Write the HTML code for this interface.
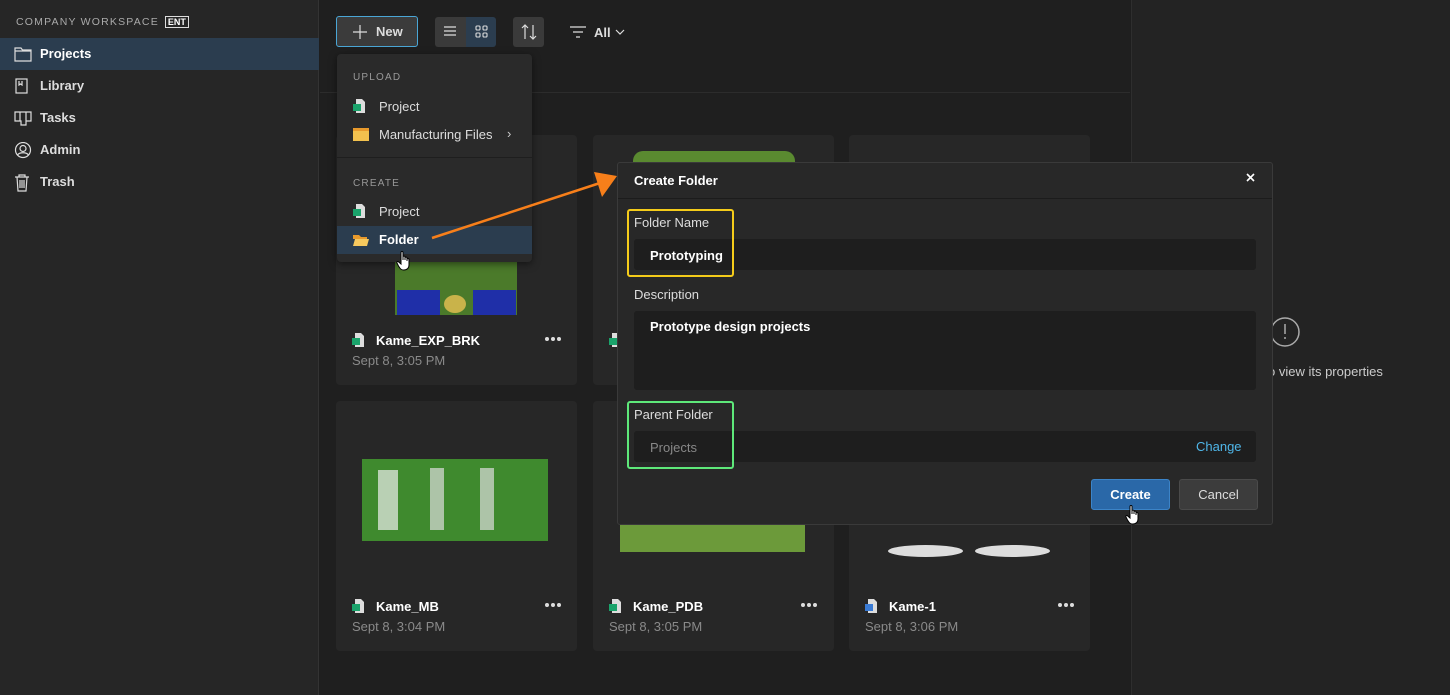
<!DOCTYPE html>
<html><head><style>
*{box-sizing:border-box;margin:0;padding:0}
body{width:1450px;height:695px;overflow:hidden;background:#1e1e1e;font-family:"Liberation Sans",sans-serif;color:#e6e6e6;position:relative;font-size:13px}
.abs{position:absolute}
.side{left:0;top:0;width:319px;height:695px;background:#262626;border-right:1px solid #333}
.ws{left:16px;top:16px;font-size:10.5px;letter-spacing:1.2px;color:#aaa}
.ent{display:inline-block;border:1px solid #ddd;color:#fff;font-size:9px;font-weight:bold;padding:0 2px;margin-left:6px;letter-spacing:0;line-height:10px}
.nav{left:0;width:319px;height:32px;line-height:32px;padding-left:40px;font-size:13px;font-weight:bold;color:#ddd}
.nav svg{position:absolute;left:14px;top:8px}
.main{left:320px;top:0;width:810px;height:695px;background:#1f1f1f}
.right{left:1131px;top:0;width:319px;height:695px;background:#232323;border-left:1px solid #2e2e2e}
.card{background:#272727;border-radius:4px;width:241px;height:250px}
.ct{font-weight:bold;font-size:13px;color:#fff}
.cd{font-size:13px;color:#8a8a8a}
.btn{border-radius:3px;background:#3a3a3a}
.menu{left:337px;top:54px;width:195px;height:208px;background:#2a2a2a;border-radius:4px;box-shadow:0 2px 8px rgba(0,0,0,.5)}
.mh{font-size:10px;letter-spacing:1.2px;color:#999;position:absolute;left:16px}
.mi{position:absolute;left:42px;font-size:13px;color:#ddd}
.dlg{left:617px;top:162px;width:656px;height:363px;background:#282828;border:1px solid #3a3a3a;border-radius:3px}
.lbl{position:absolute;left:16px;font-size:13px;color:#ddd}
.inp{position:absolute;left:16px;width:622px;background:#1e1e1e;border-radius:3px}
.pj{width:12px;height:14px}
</style></head><body>
<svg width="0" height="0" style="position:absolute"><defs>
<symbol id="dots" viewBox="0 0 18 6"><circle cx="3" cy="3" r="2" fill="#ddd"/><circle cx="9" cy="3" r="2" fill="#ddd"/><circle cx="15" cy="3" r="2" fill="#ddd"/></symbol>
<symbol id="hand" viewBox="0 0 16 22"><path d="M5 2.5c0-1.3 2-1.3 2 0V10l0-3c0-1.2 2-1.2 2 0v3-2c0-1.2 2-1.2 2 0v3-1.5c0-1.2 2-1.2 2 0V15c0 3-2 5-5 5H7.5C5 20 4 18.5 2.5 16L1 13c-.6-1.1.8-2 1.7-1L5 14z" fill="#fff" stroke="#000" stroke-width="1"/></symbol>
</defs></svg>
<div class="abs side"></div>
<div class="abs ws">COMPANY WORKSPACE<span class="ent">ENT</span></div>
<div class="abs nav" style="top:38px;background:#2b3d4f;color:#fff"><svg width="18" height="16" viewBox="0 0 18 16" fill="none" stroke="#ddd" stroke-width="1.2"><path d="M1 2h6l1.5 2H17v11H1z M1 5h16"/></svg>Projects</div>
<div class="abs nav" style="top:70px"><svg width="16" height="16" viewBox="0 0 16 16" fill="none" stroke="#ddd" stroke-width="1.2"><rect x="2" y="1" width="11" height="14"/><path d="M5 3v4l1.5-1 1.5 1V3"/></svg>Library</div>
<div class="abs nav" style="top:102px"><svg width="18" height="16" viewBox="0 0 18 16" fill="none" stroke="#ddd" stroke-width="1.2"><path d="M1 2h16v9H12v4H7v-4H1z M6 2v9 M12 2v9"/></svg>Tasks</div>
<div class="abs nav" style="top:134px"><svg width="18" height="18" viewBox="0 0 18 18" fill="none" stroke="#ddd" stroke-width="1.2"><circle cx="9" cy="8" r="7.5"/><circle cx="9" cy="6.5" r="3"/><path d="M3.5 13c2-3 9-3 11 0"/></svg>Admin</div>
<div class="abs nav" style="top:166px"><svg width="16" height="18" viewBox="0 0 16 18" fill="none" stroke="#ddd" stroke-width="1.2"><path d="M1 3h14 M5 3V1h6v2 M3 3l1 14h8l1-14 M6 6v8 M8 6v8 M10 6v8"/></svg>Trash</div>

<div class="abs main"></div>
<div class="abs" style="left:320px;top:92px;width:810px;height:1px;background:#2c2c2c"></div>
<div class="abs right"></div>
<svg class="abs" style="left:1270px;top:316px" width="32" height="32" viewBox="0 0 32 32" fill="none" stroke="#aaa" stroke-width="1.5"><circle cx="15" cy="16" r="14"/><path d="M15 8v10 M15 21v2"/></svg>
<div class="abs" style="left:1268px;top:364px;font-size:13px;color:#ccc">o view its properties</div>

<!-- toolbar -->
<div class="abs btn" style="left:336px;top:16px;width:82px;height:31px;border:1px solid #4aa6d6;background:#3b3b3b"></div>
<svg class="abs" style="left:352px;top:24px" width="16" height="16" stroke="#ddd" stroke-width="1.2"><path d="M8 1v14M1 8h14"/></svg>
<div class="abs" style="left:376px;top:24px;font-size:13px;color:#ddd;font-weight:bold">New</div>
<div class="abs btn" style="left:435px;top:17px;width:31px;height:30px;border-radius:3px 0 0 3px"></div>
<div class="abs" style="left:466px;top:17px;width:30px;height:30px;background:#2b3d4f;border-radius:0 3px 3px 0"></div>
<svg class="abs" style="left:443px;top:25px" width="14" height="12" stroke="#ddd" stroke-width="1.2"><path d="M1 2h12M1 6h12M1 10h12"/></svg>
<svg class="abs" style="left:475px;top:25px" width="13" height="13" fill="none" stroke="#ddd" stroke-width="1.1"><rect x="1" y="1" width="4" height="4" rx="1"/><rect x="8" y="1" width="4" height="4" rx="1"/><rect x="1" y="8" width="4" height="4" rx="1"/><rect x="8" y="8" width="4" height="4" rx="1"/></svg>
<div class="abs btn" style="left:513px;top:17px;width:31px;height:30px"></div>
<svg class="abs" style="left:521px;top:23px" width="16" height="18" fill="none" stroke="#ddd" stroke-width="1.2"><path d="M4 2v14M1 5l3-3 3 3M12 2v14M9 13l3 3 3-3"/></svg>
<svg class="abs" style="left:569px;top:25px" width="18" height="14" stroke="#ddd" stroke-width="1.2"><path d="M1 2h16M4 7h10M7 12h4"/></svg>
<div class="abs" style="left:594px;top:25px;font-weight:bold;color:#ddd">All</div>
<svg class="abs" style="left:615px;top:28px" width="10" height="8" fill="none" stroke="#ddd" stroke-width="1.2"><path d="M1 2l4 4 4-4"/></svg>

<!-- cards -->
<div class="abs card" style="left:336px;top:135px"></div>
<div class="abs card" style="left:593px;top:135px"></div>
<div class="abs card" style="left:849px;top:135px"></div>
<div class="abs card" style="left:336px;top:401px"></div>
<div class="abs card" style="left:593px;top:401px"></div>
<div class="abs card" style="left:849px;top:401px"></div>
<!-- images -->
<div class="abs" style="left:395px;top:260px;width:122px;height:55px;background:#4b7a2a"></div>
<div class="abs" style="left:397px;top:290px;width:43px;height:25px;background:#1f2fa8"></div>
<div class="abs" style="left:473px;top:290px;width:43px;height:25px;background:#1f2fa8"></div>
<div class="abs" style="left:444px;top:295px;width:22px;height:18px;border-radius:50%;background:#c9b34a"></div>
<div class="abs" style="left:633px;top:151px;width:162px;height:12px;background:#5a8a30;border-radius:10px 10px 0 0"></div>
<div class="abs" style="left:362px;top:459px;width:186px;height:82px;background:#3f8a2e"></div>
<div class="abs" style="left:378px;top:470px;width:20px;height:60px;background:#eee;opacity:.7"></div>
<div class="abs" style="left:430px;top:468px;width:14px;height:62px;background:#ddd;opacity:.7"></div>
<div class="abs" style="left:480px;top:468px;width:14px;height:62px;background:#ddd;opacity:.7"></div>
<div class="abs" style="left:620px;top:524px;width:185px;height:28px;background:#6c9a3a"></div>
<div class="abs" style="left:888px;top:545px;width:75px;height:12px;background:#ddd;border-radius:50%"></div>
<div class="abs" style="left:975px;top:545px;width:75px;height:12px;background:#ddd;border-radius:50%"></div>

<svg class="abs pj" style="left:352px;top:333px" viewBox="0 0 12 14"><path d="M3 0h6l3 3v11H3z" fill="#ddd"/><rect x="0" y="5" width="8" height="7" fill="#1aa36b"/></svg>
<div class="abs ct" style="left:376px;top:333px">Kame_EXP_BRK</div>
<div class="abs cd" style="left:352px;top:353px">Sept 8, 3:05 PM</div>
<svg class="abs" style="left:544px;top:336px" width="18" height="6"><use href="#dots"/></svg>
<svg class="abs pj" style="left:609px;top:333px" viewBox="0 0 12 14"><path d="M3 0h6l3 3v11H3z" fill="#ddd"/><rect x="0" y="5" width="8" height="7" fill="#1aa36b"/></svg>

<svg class="abs pj" style="left:352px;top:599px" viewBox="0 0 12 14"><path d="M3 0h6l3 3v11H3z" fill="#ddd"/><rect x="0" y="5" width="8" height="7" fill="#1aa36b"/></svg>
<div class="abs ct" style="left:376px;top:599px">Kame_MB</div>
<div class="abs cd" style="left:352px;top:619px">Sept 8, 3:04 PM</div>
<svg class="abs" style="left:544px;top:602px" width="18" height="6"><use href="#dots"/></svg>
<svg class="abs pj" style="left:609px;top:599px" viewBox="0 0 12 14"><path d="M3 0h6l3 3v11H3z" fill="#ddd"/><rect x="0" y="5" width="8" height="7" fill="#1aa36b"/></svg>
<div class="abs ct" style="left:633px;top:599px">Kame_PDB</div>
<div class="abs cd" style="left:609px;top:619px">Sept 8, 3:05 PM</div>
<svg class="abs" style="left:800px;top:602px" width="18" height="6"><use href="#dots"/></svg>
<svg class="abs pj" style="left:865px;top:599px" viewBox="0 0 12 14"><path d="M3 0h6l3 3v11H3z" fill="#ddd"/><rect x="0" y="5" width="8" height="7" fill="#3a7bd5"/></svg>
<div class="abs ct" style="left:889px;top:599px">Kame-1</div>
<div class="abs cd" style="left:865px;top:619px">Sept 8, 3:06 PM</div>
<svg class="abs" style="left:1057px;top:602px" width="18" height="6"><use href="#dots"/></svg>

<!-- menu -->
<div class="abs menu">
 <div class="mh" style="top:18px">UPLOAD</div>
 <svg class="abs pj" style="left:16px;top:45px" viewBox="0 0 12 14"><path d="M3 0h6l3 3v11H3z" fill="#ddd"/><rect x="0" y="5" width="8" height="7" fill="#1aa36b"/></svg>
 <div class="mi" style="top:45px">Project</div>
 <div class="abs" style="left:16px;top:74px;width:16px;height:13px;background:#f2c14e;border-top:3px solid #e89a2c"></div>
 <div class="mi" style="top:73px">Manufacturing Files</div>
 <div class="abs" style="left:170px;top:72px;color:#ccc">›</div>
 <div class="abs" style="left:0;top:103px;width:195px;height:1px;background:#1e1e1e"></div>
 <div class="mh" style="top:124px">CREATE</div>
 <svg class="abs pj" style="left:16px;top:150px" viewBox="0 0 12 14"><path d="M3 0h6l3 3v11H3z" fill="#ddd"/><rect x="0" y="5" width="8" height="7" fill="#1aa36b"/></svg>
 <div class="mi" style="top:150px">Project</div>
 <div class="abs" style="left:0;top:172px;width:195px;height:28px;background:#2b3d4f"></div>
 <svg class="abs" style="left:16px;top:180px" width="16" height="13"><path d="M0 1h6l2 2h6v2H0z" fill="#e89a2c"/><path d="M0 12l2-7h14l-2 7z" fill="#f7c95e"/></svg>
 <div class="mi" style="top:178px;color:#fff;font-weight:bold">Folder</div>
</div>
<svg class="abs" style="left:396px;top:250px" width="16" height="22"><use href="#hand"/></svg>

<!-- dialog -->
<div class="abs dlg">
 <div class="abs" style="left:16px;top:10px;font-weight:bold;color:#fff">Create Folder</div>
 <svg class="abs" style="left:628px;top:10px" width="9" height="9" stroke="#fff" stroke-width="1.6"><path d="M1 1l7 7M8 1l-7 7"/></svg>
 <div class="abs" style="left:0;top:35px;width:654px;height:1px;background:#1c1c1c"></div>
 <div class="lbl" style="top:52px">Folder Name</div>
 <div class="inp" style="top:76px;height:31px"></div>
 <div class="abs" style="left:32px;top:85px;font-weight:bold;color:#fff">Prototyping</div>
 <div class="lbl" style="top:124px">Description</div>
 <div class="inp" style="top:148px;height:79px"></div>
 <div class="abs" style="left:32px;top:156px;font-weight:bold;color:#fff">Prototype design projects</div>
 <div class="lbl" style="top:244px">Parent Folder</div>
 <div class="inp" style="top:268px;height:31px"></div>
 <div class="abs" style="left:32px;top:277px;color:#888">Projects</div>
 <div class="abs" style="left:578px;top:276px;color:#4fb6e8">Change</div>
 <div class="abs" style="left:473px;top:316px;width:79px;height:31px;background:#2a68a8;border:1px solid #3c84c8;border-radius:3px;color:#fff;font-weight:bold;text-align:center;line-height:29px">Create</div>
 <div class="abs" style="left:561px;top:316px;width:79px;height:31px;background:#3c3c3c;border:1px solid #4a4a4a;border-radius:3px;color:#ddd;text-align:center;line-height:29px">Cancel</div>
</div>
<svg class="abs" style="left:1125px;top:504px" width="16" height="22"><use href="#hand"/></svg>
<div class="abs" style="left:627px;top:209px;width:107px;height:68px;border:2px solid #f5cc1a;border-radius:3px"></div>
<div class="abs" style="left:627px;top:401px;width:107px;height:68px;border:2px solid #5ee87a;border-radius:3px"></div>
<svg class="abs" style="left:0;top:0" width="1450" height="695"><line x1="432" y1="238" x2="600" y2="183" stroke="#f77f1a" stroke-width="2.5"/><path d="M617 176L594 172L602 197z" fill="#f77f1a"/></svg>
</body></html>
